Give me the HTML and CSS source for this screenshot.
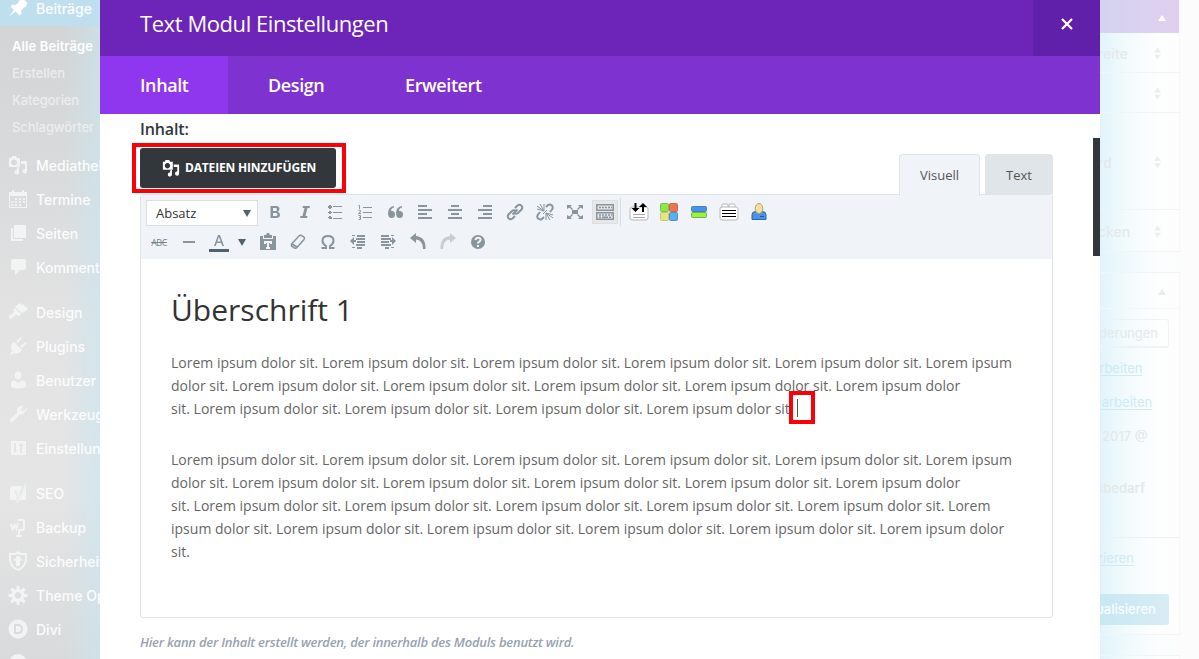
FILE: index.html
```html
<!DOCTYPE html>
<html lang="de">
<head>
<meta charset="utf-8">
<title>Text Modul Einstellungen</title>
<link rel="stylesheet" href="styles.css">
</head>
<body>
<div class="app">
<nav class="sidebar">
  <div class="item current"><svg viewBox="0 0 20 20"><path d="M10.4 3 15.500 1l4 4-2 4.500-1-.5-3.500 3.500.5 3-2 2-4-4-6.500 5L6 12 2.500 8.500l2-2 3 .5L11 4z"/></svg>Beiträge</div>
  <div class="submenu"><b>Alle Beiträge</b><span>Erstellen</span><span>Kategorien</span><span>Schlagwörter</span></div>
  <div class="item"><svg viewBox="0 0 20 20"><path fill-rule="evenodd" d="M1 3h2l1-2h4l1 2h3v9H1zM6 4.500a3 3 0 1 0 .1 0zM13 6h6v10a2.300 2.300 0 1 1-2-2V9h-4zM11 11v6a2.300 2.300 0 1 1-2-2v-2z"/></svg>Mediathek</div>
  <div class="item"><svg viewBox="0 0 20 20"><path fill-rule="evenodd" d="M1 3h3V1h2v2h8V1h2v2h3v16H1zM2 7v11h16V7z"/><path d="M7 9h2v2H7zm4 0h2v2h-2zM15 9h2v2h-2zM3.500 12h2v2h-2zM7 12h2v2H7zm4 0h2v2h-2zm4 0h2v2h-2zM3.500 15h2v2h-2zM7 15h2v2H7zm4 0h2v2h-2z"/></svg>Termine</div>
  <div class="item"><svg viewBox="0 0 20 20"><path d="M6 2h12v13H6zM3 5h2v11h10v2H3z"/></svg>Seiten</div>
  <div class="item"><svg viewBox="0 0 20 20"><path d="M5 2h11q2 0 2 2v7q0 2-2 2h-4l-5 5v-5H5q-2 0-2-2V4q0-2 2-2z"/></svg>Kommentare</div>
  <div class="item gap"><svg viewBox="0 0 20 20"><path d="m8 4 4-3 2 2 1-1 4 4 1-1-1 3-5 3-7-6zM7 6l6 6-2 2-3-1-5 4-2-1v-2l5-4-1-2z"/></svg>Design</div>
  <div class="item"><svg viewBox="0 0 20 20"><path d="m6 6 8 8q-3 5-8 3l-3 2-1-1 2-3Q1 9 6 6zM13 1l1 1-4 5-2-2zM18 6l1 1-5 5-2-2z"/></svg>Plugins</div>
  <div class="item"><svg viewBox="0 0 20 20"><ellipse cx="10" cy="5.500" rx="3.300" ry="4"/><path d="m6 10 4 3 4-3q4 1 4 4v3q-8 3-15 0v-3q0-3 3-4z"/></svg>Benutzer</div>
  <div class="item"><svg viewBox="0 0 20 20"><path d="M17 7.500 15 10l-4 1-6 7q-2 1-3-1v-2l7-6V5q2-4 6-3l-2 3 1 2 3-1 2-3q1 2-2 4.500z"/></svg>Werkzeuge</div>
  <div class="item"><svg viewBox="0 0 20 20"><path fill-rule="evenodd" d="M3 3h15v14H3zM6 5v7H4.500L7 15l2.500-3H8V5zm6 10h2V8h2l-3-3-3 3h2z"/></svg>Einstellungen</div>
  <div class="item gap"><svg viewBox="0 0 20 20"><path d="M5 3h9.500L11 12 9 7H6l3.500 8L8 17H4q-2 0-2-2V6q0-3 3-3zM17.500 4q.5 0 .5 1v12h-6z"/><path d="M17 1h1.500l-6 16-4 3v-2l2-3L7 7h2l3 6z" opacity=".7"/></svg>SEO</div>
  <div class="item"><svg viewBox="0 0 20 20" class="line"><path d="m3 7 1.500 5L6.500 8l2 4L10 6M10 3h4q2 0 2 2v6q0 2-2 2h-3v6M8 19h6"/></svg>Backup</div>
  <div class="item"><svg viewBox="0 0 20 20"><path fill-rule="evenodd" d="m10 0 3 2h6v7q-1 8-9 11-8-3-9-11V2h6zM3 4v5q1 6 7 9 6-3 7-9V4h-5l-2-1-2 1z"/><path d="M8 5h4v2l3 2-3 1v5H8v-5L5 9l3-2z"/></svg>Sicherheit</div>
  <div class="item"><svg viewBox="0 0 20 20"><path fill-rule="evenodd" d="M8.500 1h3v3l2 .8 2.200-2.200 2.200 2.200-2.200 2.200.8 2h3v3h-3l-.8 2 2.200 2.200-2.200 2.200-2.200-2.200-2 .8v3h-3v-3l-2-.8-2.200 2.200-2.200-2.200L4.300 14l-.8-2h-3V9h3l.8-2-2.200-2.200 2.200-2.200 2.200 2.200 2-.8zM10 7a3.300 3.300 0 1 0 .1 0z"/></svg>Theme Optionen</div>
  <div class="item"><svg viewBox="0 0 20 20"><path fill-rule="evenodd" d="M10 .5a9.500 9.500 0 1 0 .1 0zM6 5h4q5 0 5 5t-5 5H6zm2 2v6h2q3 0 3-3t-3-3z"/></svg>Divi</div>
  <div class="item"><svg viewBox="0 0 20 20"><circle cx="10" cy="10" r="9"/></svg></div>
</nav>

<main class="modal">
  <header class="head"><h1>Text Modul Einstellungen</h1><button class="close"><svg viewBox="0 0 12 12"><path d="m1 1 10 10m0-10-10 10"/></svg></button></header>
  <div class="tabs"><span class="tab active">Inhalt</span><span class="tab design">Design</span><span class="tab extended">Erweitert</span></div>
  <section class="content">
    <label class="label">Inhalt:</label>
    <div class="actions">
      <div class="marked"><button class="add"><svg viewBox="0 0 20 20"><path fill-rule="evenodd" d="M1 3h2l1-2h4l1 2h3v9H1zM6 4.500a3 3 0 1 0 .1 0zM13 6h6v10a2.300 2.300 0 1 1-2-2V9h-4zM11 11v6a2.300 2.300 0 1 1-2-2v-2z"/></svg><span>DATEIEN HINZUFÜGEN</span></button></div>
      <div class="modes"><span class="mode on">Visuell</span><span class="mode">Text</span></div>
    </div>
    <div class="editor">
      <div class="toolbar">
        <div class="row">
          <div class="select"><span>Absatz</span><i class="down"></i></div>
          <i class="cell"><svg viewBox="0 0 20 20"><path fill-rule="evenodd" d="M5.500 4H11q3.500 0 3.500 3 0 2-2 2.700 2.500.6 2.500 3.100 0 3.200-4 3.200H5.500zM8 6v3h2.700Q12 9 12 7.500T10.700 6zm0 5v3h2.800q1.700 0 1.700-1.500T10.800 11z"/></svg></i>
          <i class="cell"><svg viewBox="0 0 20 20"><path d="M8 4h7l-.5 2h-2l-2 8h2l-.5 2H5l.5-2h2l2-8h-2z"/></svg></i>
          <i class="cell"><svg viewBox="0 0 20 20"><path d="M4 3h2v1h1v2H6v1H4V6H3V4h1zm0 6h2v1h1v1H6v1H4v-1H3v-1h1zm0 5h2v1h1v2H4v-1H3v-1h1zM8 4h9v1H8zm0 6h9v1H8zm0 6h9v1H8z"/></svg></i>
          <i class="cell"><svg viewBox="0 0 20 20"><path d="M8 5h9v1H8zm0 5h9v1H8zm0 5h9v1H8z"/><path class="thin" d="M3.500 3.500h1V7M3.500 8.500h2v1.300l-2 1.700h2.500M3.500 13.500h2v2H4h1.500v2h-2"/></svg></i>
          <i class="cell"><svg viewBox="0 0 20 20"><path d="M9 4v1.500Q6 6 6 9h1q3 0 3 3.500T6.500 16Q3 16 3 11q0-6 6-7zm8 0v1.500q-3 .5-3 3.500h1q3 0 3 3.500T14.500 16Q11 16 11 11q0-6 6-7z"/></svg></i>
          <i class="cell"><svg viewBox="0 0 20 20"><path d="M3 3h9v2H3zm0 4h14v2H3zm0 4h9v2H3zm0 4h14v2H3z"/></svg></i>
          <i class="cell"><svg viewBox="0 0 20 20"><path d="M6 3h8v2H6zM3 7h14v2H3zm3 4h8v2H6zm-3 4h14v2H3z"/></svg></i>
          <i class="cell"><svg viewBox="0 0 20 20"><path d="M8 3h9v2H8zM3 7h14v2H3zm5 4h9v2H8zm-5 4h14v2H3z"/></svg></i>
          <i class="cell"><svg viewBox="0 0 20 20" class="line"><path d="m10 6 2.500-2.500q2-1.500 4 .2 1.500 2 0 3.800L13 11q-2 1.500-4 0M10 14l-2.500 2.500q-2 1.500-4-.2-1.500-2 0-3.800L7 9q2-1.500 4 0M7.500 12.500l5-5"/></svg></i>
          <i class="cell"><svg viewBox="0 0 20 20" class="line"><path d="m11 5 2-2q2-1 4 .5 1.500 2 0 4L15 10M9 15l-2 2q-2 1-4-.5-1.500-2 0-4L5 10"/><path class="thin" d="M9 9 2 7m7 2L5 2m4 7V2m0 7L2 4m9 7 7 2m-7-2 4 7m-4-7v7m0-7 7 5M8 12l4-4"/></svg></i>
          <i class="cell"><svg viewBox="0 0 20 20"><path d="M7 8h6v4H7zM2 3h5L5.500 4.500 8 7 7 8 4.500 5.500 2 7zm16 0h-5l1.500 1.500L12 7l1 1 2.500-2.500L18 7zM2 17h5l-1.500-1.500L8 13l-1-1-2.500 2.500L2 13zm16 0h-5l1.500-1.500L12 13l1-1 2.500 2.500L18 13z"/></svg></i>
          <i class="cell pressed"><svg viewBox="0 0 20 20"><path fill-rule="evenodd" d="M1 2h18v7H1zm1.500 1.500v4h15v-4zM1 10h18v8H1zm1.500 1.500v5h15v-5z"/><path class="dots" d="M4 5.500h13M4 13h13"/><path d="M4 14.500h2V16H4zm3 0h6V16H7zm7 0h2V16h-2z"/></svg></i>
          <i class="divider"></i>
          <i class="cell"><svg viewBox="0 0 20 20"><rect class="paper" x="1" y="5" width="18" height="13" rx="2"/><path stroke="#aaa" d="M4 12.500h12M4 15.500h12"/><path fill="#000" d="M5 1h2v5h3l-4 4-4-4h3zm7.500 9h2V5h3l-4-4-4 4h3z" transform="translate(.5 0)"/></svg></i>
          <i class="cell"><svg viewBox="0 0 20 20"><rect x="1.500" y="1.500" width="8" height="8" rx="1" fill="#8ce943" stroke="#7cbd55"/><rect x="10.500" y="1.500" width="8" height="8" rx="1" fill="#ef7352" stroke="#c96b52"/><rect x="1.500" y="10.500" width="8" height="8" rx="1" fill="#e8e580" stroke="#c9c378"/><rect x="10.500" y="10.500" width="8" height="8" rx="1" fill="#55b2ef" stroke="#5192bb"/></svg></i>
          <i class="cell"><svg viewBox="0 0 20 20"><rect x="2.500" y="4.500" width="15" height="5" rx="1" fill="#4a91ed" stroke="#477fc4"/><rect x="2.500" y="10.500" width="15" height="5" rx="1" fill="#98f43d" stroke="#70b34b"/></svg></i>
          <i class="cell"><svg viewBox="0 0 20 20"><rect class="paper" x="3" y="2" width="6" height="5" rx="1"/><rect class="paper" x="10" y="2" width="6" height="5" rx="1"/><rect class="paper" x="1" y="5" width="18" height="13" rx="2"/><path stroke="#000" d="M3 8.500h14M3 11.500h14M3 14.500h14"/></svg></i>
          <i class="cell"><svg viewBox="0 0 20 20"><path fill="#4d92e7" stroke="#2866b1" d="M3 17.500v-5q0-3 4-3h6q4 0 4 3v5z"/><path fill="#24579d" d="M11 14h4v1h-4z"/><ellipse cx="10" cy="6.500" rx="3.800" ry="5" fill="#f4df9c" stroke="#b4a16e"/></svg></i>
        </div>
        <div class="row second">
          <i class="cell strike">ABC</i>
          <i class="cell"><svg viewBox="0 0 20 20"><path d="M4 9h12v2H4z"/></svg></i>
          <i class="cell"><svg viewBox="0 0 20 20"><path fill-rule="evenodd" d="M9 3h2l4 11h-1.700l-1.100-3H7.800l-1.100 3H5zm1 2-1.700 4.500h3.400z"/><path fill="#50626f" d="M0 17h20v3H0z"/></svg></i>
          <i class="arrowcell"><i class="down"></i></i>
          <i class="cell"><svg viewBox="0 0 20 20"><path fill-rule="evenodd" d="M2 4h3v3h10V4h3v14H2zm4-1h2l1-2h2l1 2h2v3H6zM6 9v3h2v-1h1v4H8v2h4v-2h-1v-4h1v1h2V9z"/></svg></i>
          <i class="cell"><svg viewBox="0 0 20 20" class="line erase"><path d="M4 11.500 11 4q1-1 2.500-.5L16 5q1 1 0 2.500l-7 8q-1 1-2.500.5L4 14.500q-1.200-1 0-3zM4 12l5 3"/></svg></i>
          <i class="cell"><svg viewBox="0 0 20 20" class="line"><path d="M3.500 16H8v-2q-3.500-2-3.500-5.500Q4.500 4 10 4t5.500 4.500Q15.500 12 12 14v2h4.500"/></svg></i>
          <i class="cell"><svg viewBox="0 0 20 20"><path d="M9 3h8v2H9zm-1 3h9v2H8zm1 3h8v2H9zm-1 3h9v2H8zm1 3h5v2H9zM2 9l4-4v3h2v2H6v3zM4 3h3v1H4zm0 12h3v1H4z"/></svg></i>
          <i class="cell"><svg viewBox="0 0 20 20"><path d="M3 3h8v2H3zm0 3h10v2H3zm0 3h8v2H3zm0 3h10v2H3zm4 3h4v2H7zM18 9l-4-4v3h-2v2h2v3zM13 3h3v1h-3zm0 12h3v1h-3z"/></svg></i>
          <i class="cell"><svg viewBox="0 0 20 20"><path d="m2 6 6-5v3q10 1 9.500 13H15Q15 8 8 7.500V11z"/></svg></i>
          <i class="cell faded"><svg viewBox="0 0 20 20"><path d="m18 6-6-5v3Q2 5 2.500 17H5Q5 8 12 7.500V11z"/></svg></i>
          <i class="cell"><svg viewBox="0 0 20 20"><circle cx="10" cy="10" r="7"/><path fill="none" stroke="#f0f4f9" stroke-width="2" d="M7.500 8q.3-2.300 2.600-2.300 2.500 0 2.500 2.100 0 1.200-1.500 2-1.100.6-1.100 1.700M10 13v2"/></svg></i>
        </div>
      </div>
      <article class="text">
        <h2>Überschrift 1</h2>
        <p>Lorem ipsum dolor sit. Lorem ipsum dolor sit. Lorem ipsum dolor sit. Lorem ipsum dolor sit. Lorem ipsum dolor sit. Lorem ipsum<br>dolor sit. Lorem ipsum dolor sit. Lorem ipsum dolor sit. Lorem ipsum dolor sit. Lorem ipsum dolor sit. Lorem ipsum dolor<br>sit. Lorem ipsum dolor sit. Lorem ipsum dolor sit. Lorem ipsum dolor sit. Lorem ipsum dolor <span class="anchor">sit.<i class="caret"></i></span></p>
        <p>Lorem ipsum dolor sit. Lorem ipsum dolor sit. Lorem ipsum dolor sit. Lorem ipsum dolor sit. Lorem ipsum dolor sit. Lorem ipsum<br>dolor sit. Lorem ipsum dolor sit. Lorem ipsum dolor sit. Lorem ipsum dolor sit. Lorem ipsum dolor sit. Lorem ipsum dolor<br>sit. Lorem ipsum dolor sit. Lorem ipsum dolor sit. Lorem ipsum dolor sit. Lorem ipsum dolor sit. Lorem ipsum dolor sit. Lorem<br>ipsum dolor sit. Lorem ipsum dolor sit. Lorem ipsum dolor sit. Lorem ipsum dolor sit. Lorem ipsum dolor sit. Lorem ipsum dolor<br>sit.</p>
      </article>
    </div>
    <div class="hint">Hier kann der Inhalt erstellt werden, der innerhalb des Moduls benutzt wird.</div>
  </section>
  <div class="scroll"></div>
</main>

<aside class="settings">
  <div class="panel first">
    <div class="title"><i class="up"></i></div>
    <div class="option"><span class="o1">reite</span><i class="sort"></i></div>
    <div class="option"><span></span><i class="sort"></i></div>
    <div class="option tall"><span class="o2">rd</span><i class="sort"></i></div>
    <div class="option last"><span class="o3">cken</span><i class="sort"></i></div>
  </div>
  <div class="panel publish">
    <div class="ptitle"><i class="up"></i></div>
    <div class="preview">derungen</div>
    <div class="line1"><u>arbeiten</u></div>
    <div class="line2"><u>earbeiten</u></div>
    <div class="date">2017 @</div>
    <div class="need">sbedarf</div>
    <div class="foot"><u>zieren</u><div class="update">ualisieren</div></div>
  </div>
  <div class="panel next"></div>
</aside>
</div>
</body>
</html>
```

FILE: styles.css
```css
* { box-sizing: border-box; }
body { margin: 0; overflow: hidden; font-family: "Open Sans", "Noto Sans", sans-serif; }
svg { display: block; }
.app { display: flex; width: 1199px; height: 659px; overflow: hidden; background: #fff; }

.sidebar { flex: 0 0 100px; overflow: hidden; white-space: nowrap; font: 500 14px Inter, sans-serif; color: #fbfcfc; background: linear-gradient(90deg, transparent 62%, rgba(198,231,241,.55)), linear-gradient(180deg, #d2d3d4 0, #d9dadb 25%, #e3e3e4 50%, #e5e5e6 75%, #d9dadb 100%); }
.item { display: flex; align-items: center; height: 34px; padding: 0 0 2px 8px; gap: 8px; letter-spacing: 0; }
.item svg { width: 20px; height: 20px; flex: none; fill: #f2f3f3; }
.item svg.line { fill: none; stroke: #f2f3f3; }
.item.current { margin-top: -8px; background: #bfdfef; }
.item.current svg { fill: #fff; }
.item.gap { margin-top: 11px; }
.submenu { display: flex; flex-direction: column; height: 123px; padding: 7px 0 0 12px; font-size: 13px; line-height: 27px; letter-spacing: -.1px; color: #eceded; }
.submenu b { font-weight: 600; letter-spacing: .1px; color: #fff; }
.line { fill: none; stroke: #8a949d; stroke-width: 2; }

.modal { position: relative; flex: 0 0 1000px; background: #fff; }
.head { display: flex; justify-content: space-between; height: 56px; padding-left: 40px; background: #6d24b9; color: #fff; }
.head h1 { margin: 0; font-size: 22px; line-height: 47px; font-weight: 400; letter-spacing: -.43px; }
.close { display: flex; justify-content: center; width: 67px; padding: 18px 0 0; border: 0; background: #6120aa; }
.close svg { width: 12px; height: 12px; stroke: #fff; stroke-width: 2.200; }
.tabs { display: flex; height: 58px; background: #7e32d0; color: #fff; font-size: 18px; font-weight: 600; line-height: 59px; letter-spacing: -.4px; }
.tab { padding: 0 40px; }
.tab.active { width: 128px; background: #8f37ee; }
.tab.design { width: 137px; }
.content { padding: 0 47px 0 40px; }
.label { display: block; height: 29px; font-size: 16px; font-weight: 600; line-height: 30px; letter-spacing: -.15px; color: #32373c; }
.actions { display: flex; justify-content: space-between; height: 51px; margin-left: -8px; }
.marked { width: 214px; height: 50px; padding: 1px 4px; border: 4px solid #fb0007; }
.add { display: flex; align-items: center; gap: 5px; width: 196px; height: 40px; padding: 0 0 1px 22px; border: 0; border-radius: 3px; background: #32373c; color: #fff; font: 700 12px "Open Sans", sans-serif; letter-spacing: -.17px; white-space: nowrap; }
.add svg { width: 18px; height: 18px; fill: #fff; flex: none; }
.modes { display: flex; gap: 5px; padding-top: 11px; }
.mode { width: 68px; height: 40px; border: 1px solid #dfe3e6; border-bottom: 0; border-radius: 4px 4px 0 0; background: #e0e5e9; color: #555; font-size: 13px; line-height: 41px; text-align: center; }
.mode.on { position: relative; z-index: 1; width: 81px; height: 42px; background: #f0f4f9; border-color: #dce4ed; }
.editor { height: 424px; border: 1px solid #dfe4ea; border-radius: 3px; }
.toolbar { height: 64px; padding: 2px 0 0 3px; background: #f0f4f9; }
.row { display: flex; height: 30px; align-items: center; }
.select { display: flex; align-items: center; justify-content: space-between; width: 112px; height: 26px; margin: 2px 2px 0; padding: 0 6px 0 9px; border: 1px solid #dcdfe2; background: #fff; font-size: 13px; color: #333; }
.down { border: 4px solid transparent; border-top: 7px solid #50626f; border-bottom: 0; }
.cell { display: flex; flex: 0 0 30px; justify-content: center; align-items: center; height: 26px; }
.cell svg { width: 20px; height: 20px; }
.cell svg:not(.line) { fill: #8a949d; }
.cell .thin { fill: none; stroke: #8a949d; stroke-width: 1; }
.cell .dots { stroke: #8a949d; stroke-width: 1.500; stroke-dasharray: 2 1; }
.cell .paper { fill: #fff; stroke: #b5b7b9; }
.pressed { flex-basis: 26px; margin: 0 2px; height: 24px; background: #e5e7e9; border: 1px solid #dddfe1; }
.divider { width: 1px; height: 28px; margin: 0 3px 0 0; background: #dadfe4; }
.arrowcell { display: flex; justify-content: center; width: 19px; padding-right: 3px; }
.strike { font: 9px "Open Sans", sans-serif; color: #78838c; text-decoration: line-through; letter-spacing: -.5px; }
.faded { opacity: .4; }
.cell .erase { stroke-width: 1.500; }
.text { padding: 30px 0 0 30px; color: #666; white-space: nowrap; }
.text h2 { margin: 0 0 20px; color: #333; font-size: 30px; font-weight: 400; line-height: 42px; }
.text p { margin: 0 0 28px; font-size: 14px; line-height: 23px; letter-spacing: .01px; }
.anchor { position: relative; }
.caret { position: absolute; left: 100%; top: -8px; width: 26px; height: 33px; margin-left: -5px; border: 4px solid #fb0007; background: linear-gradient(#555, #555) 4px 4px / 1px 18px no-repeat; }
.hint { margin-top: 14px; color: #98a2b0; font-size: 13px; font-weight: 600; font-style: italic; line-height: 21px; letter-spacing: -.23px; white-space: nowrap; }
.scroll { position: absolute; top: 138px; right: 0; width: 7px; height: 118px; background: #32373c; }

.settings { flex: 0 0 99px; overflow: hidden; font: 14px Inter, sans-serif; color: #e4e9eb; background: linear-gradient(90deg, #e1f4fb 0, #f1fafd 30%, #fbfdfe 58%, #fcfcfc 80%); }
.panel { width: 80px; border-right: 1px solid #f6f8f8; background: linear-gradient(90deg, transparent, #fff8); }
.title { display: flex; justify-content: flex-end; align-items: center; height: 33px; padding: 2px 13px 0 0; background: linear-gradient(90deg, #d5d3f1, #e0cfef); }
.up { border: 4px solid transparent; border-bottom: 6px solid #e8ecee; border-top: 0; }
.title .up { border-bottom-color: #fff; }
.option { display: flex; align-items: center; justify-content: space-between; height: 40px; padding: 2px 18px 0 0; border-bottom: 1px solid #f0f6f8; font-weight: 500; }
.option span { margin-left: -2px; }
.option.tall { height: 97px; }
.option.last { height: 42px; }
.first { height: 252px; border-bottom: 1px solid #edf4f6; }
.sort { width: 7px; height: 12px; background: linear-gradient(#e9eef0 0 0); clip-path: polygon(50% 0, 100% 42%, 0 42%, 0 60%, 100% 60%, 50% 100%, 0 60%, 0 42%); }
.publish { height: 363px; margin-top: 20px; border-top: 1px solid #f0f6f8; border-bottom: 1px solid #f0f5f7; }
.publish u { color: #ceeaf3; text-underline-offset: 2px; }
.ptitle { display: flex; justify-content: flex-end; align-items: center; height: 36px; padding: 3px 13px 0 0; border-bottom: 1px solid #f2f7f9; }
.preview { width: 69px; height: 29px; margin-top: 10px; border: 1px solid #eef3f5; border-left: 0; border-bottom-width: 2px; border-radius: 0 3px 3px 0; line-height: 27px; font-size: 13px; text-indent: -1px; }
.line1, .line2, .need, .foot { text-indent: -6px; }
.line1 { margin-top: 12px; line-height: 17px; font-size: 13px; text-indent: -8px; }
.line2 { margin-top: 17px; line-height: 17px; font-size: 13px; }
.date { padding-left: 2px; margin-top: 17px; line-height: 17px; font-weight: 500; font-size: 13px; }
.need { margin-top: 35px; line-height: 17px; font-weight: 600; font-size: 13px; text-indent: -4px; }
.foot { margin-top: 40px; padding-top: 11px; border-top: 1px solid #edf3f5; font-size: 13px; line-height: 18px; text-indent: -4px; }
.update { width: 69px; height: 31px; margin-top: 27px; border-radius: 0 3px 3px 0; background: linear-gradient(90deg, #c8e8f4, #d8ecf5); color: #f8fdff; font-weight: 500; line-height: 31px; }
.next { height: 20px; margin-top: 20px; border-top: 1px solid #f0f5f7; }
```
